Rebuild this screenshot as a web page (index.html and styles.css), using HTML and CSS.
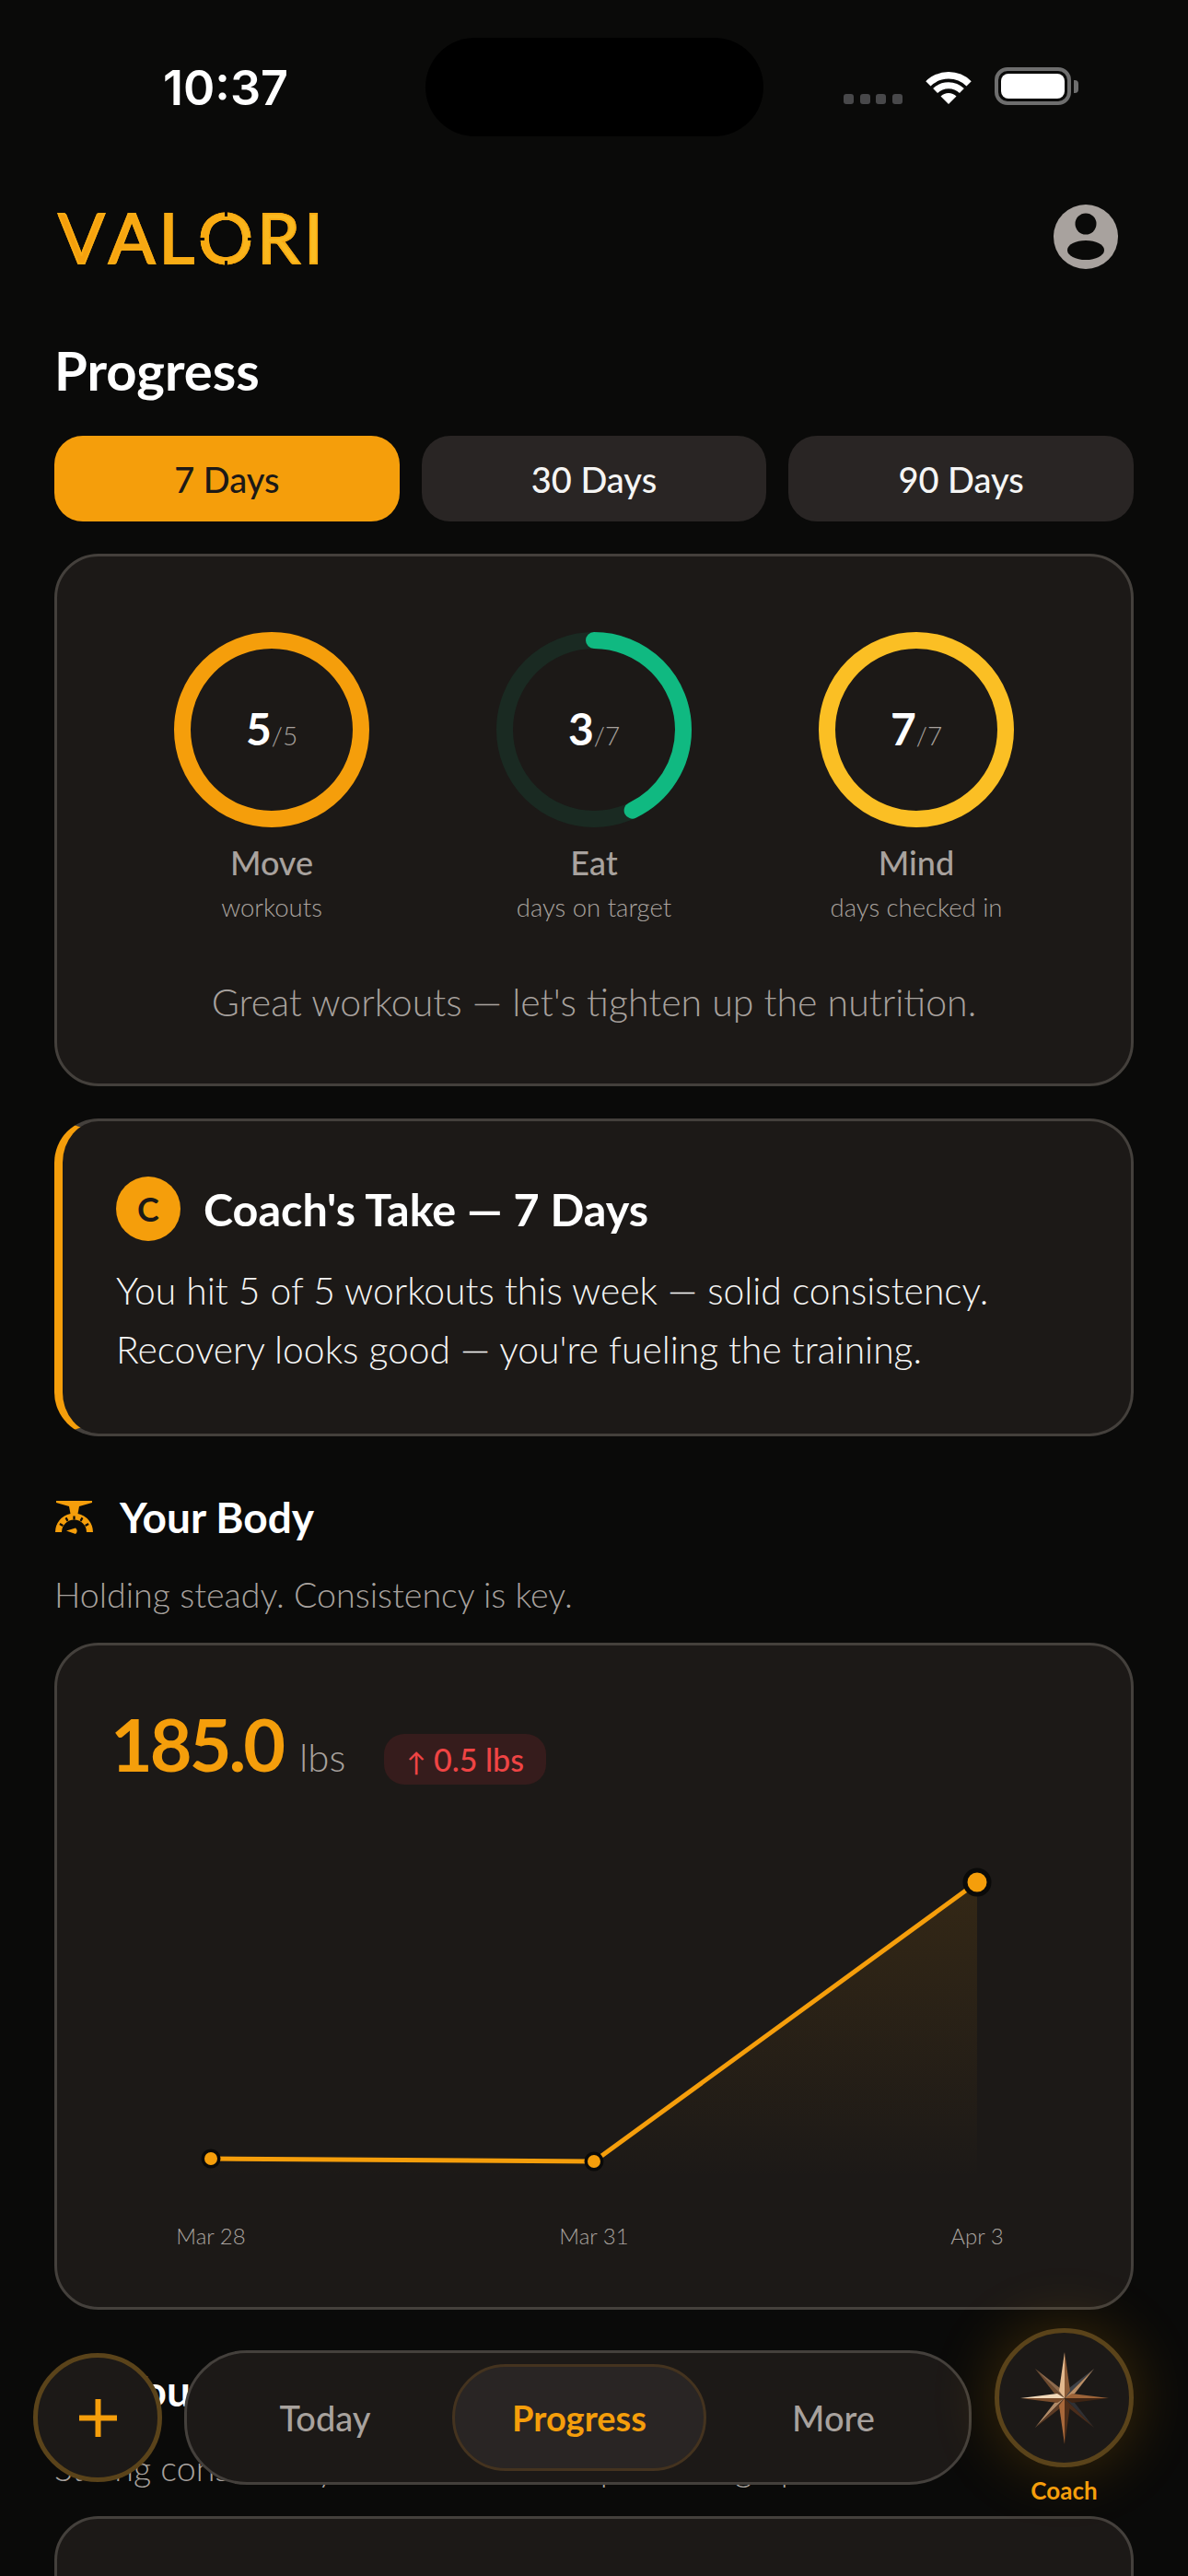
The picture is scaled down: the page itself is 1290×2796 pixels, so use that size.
FILE: index.html
```html
<!DOCTYPE html>
<html lang="en">
<head>
<meta charset="utf-8">
<title>Valori — Progress</title>
<link rel="stylesheet" href="styles.css">
</head>
<body>
<div class="screen">
  <header class="status">
    <div class="time">10:37</div>
    <div class="island"></div>
    <div class="status-right">
      <div class="signal"><i></i><i></i><i></i><i></i></div>
      <svg class="wifi" width="56" height="42" viewBox="0 0 56 42"><path d="M28 41 L19.5 32.5 A12 12 0 0 1 36.5 32.5 Z" fill="#fff"/><path d="M13.6 26.6 A20.5 20.5 0 0 1 42.4 26.6" fill="none" stroke="#fff" stroke-width="7"/><path d="M5.9 18.9 A31.5 31.5 0 0 1 50.1 18.9" fill="none" stroke="#fff" stroke-width="7.5"/></svg>
      <div class="battery"><div class="battery-fill"></div></div>
      <div class="battery-nub"></div>
    </div>
  </header>

  <div class="brand-row">
    <div class="logo">VAL<span class="logo-o">O<i class="n-t"></i><i class="n-b"></i><i class="n-l"></i><i class="n-r"></i></span>RI</div>
    <svg class="avatar" width="70" height="70" viewBox="0 0 70 70"><circle cx="35" cy="35" r="35" fill="#a8a29e"/><circle cx="35" cy="21" r="11.5" fill="#0a0a09"/><ellipse cx="35" cy="49.5" rx="20" ry="10.5" fill="#0a0a09"/></svg>
  </div>

  <main class="content">
    <h1 class="page-title">Progress</h1>
    <div class="tabs">
      <div class="tab tab-active">7 Days</div>
      <div class="tab">30 Days</div>
      <div class="tab">90 Days</div>
    </div>

    <section class="card rings-card">
      <div class="rings">
        <div class="ring-col">
          <div class="ring">
            <svg width="212" height="212" viewBox="0 0 212 212"><circle cx="106" cy="106" r="97" fill="none" stroke="#f59e0b" stroke-width="18"/></svg>
            <div class="ring-value"><b>5</b><span>/5</span></div>
          </div>
          <div class="ring-label">Move</div>
          <div class="ring-sub">workouts</div>
        </div>
        <div class="ring-col">
          <div class="ring">
            <svg width="212" height="212" viewBox="0 0 212 212"><circle cx="106" cy="106" r="97" fill="none" stroke="#1a2a22" stroke-width="18"/><circle cx="106" cy="106" r="97" fill="none" stroke="#10b981" stroke-width="18" stroke-linecap="round" stroke-dasharray="261.2 609.5" transform="rotate(-90 106 106)"/></svg>
            <div class="ring-value"><b>3</b><span>/7</span></div>
          </div>
          <div class="ring-label">Eat</div>
          <div class="ring-sub">days on target</div>
        </div>
        <div class="ring-col">
          <div class="ring">
            <svg width="212" height="212" viewBox="0 0 212 212"><circle cx="106" cy="106" r="97" fill="none" stroke="#fbbf24" stroke-width="18"/></svg>
            <div class="ring-value"><b>7</b><span>/7</span></div>
          </div>
          <div class="ring-label">Mind</div>
          <div class="ring-sub">days checked in</div>
        </div>
      </div>
      <p class="rings-msg">Great workouts — let's tighten up the nutrition.</p>
    </section>

    <section class="card coach-card">
      <div class="coach-head">
        <div class="coach-badge">C</div>
        <h2 class="coach-title">Coach's Take — 7 Days</h2>
      </div>
      <p class="coach-body">You hit 5 of 5 workouts this week — solid consistency.<br>Recovery looks good — you're fueling the training.</p>
    </section>

    <div class="section-head">
      <svg class="section-icon" width="42" height="38" viewBox="0 0 42 38"><path fill="#f59e0b" d="M1 1 H40 V3 L26 7 L24.5 15 A20.5 20.5 0 0 1 41 35 H34 A13.5 13.5 0 0 0 7 35 H0 A20.5 20.5 0 0 1 16.5 15 L15 7 L1 3 Z"/><path fill="#f59e0b" d="M12 33.5 L22 30.5 A4 4 0 0 1 22 37 Z"/><g stroke="#0a0a09" stroke-width="2.2"><path d="M20.5 21.5 V17.5"/><path d="M13.5 22.9 L11.5 19.4"/><path d="M27.5 22.9 L29.5 19.4"/><path d="M8.4 28 L4.9 26"/><path d="M32.6 28 L36.1 26"/></g></svg>
      <h2 class="section-title">Your Body</h2>
    </div>
    <p class="section-sub">Holding steady. Consistency is key.</p>

    <section class="card body-card">
      <div class="weight-row">
        <span class="weight-num">185.0</span>
        <span class="weight-unit">lbs</span>
        <span class="weight-delta"><span class="delta-arrow">↑</span> 0.5 lbs</span>
      </div>
      <svg class="chart" width="1170" height="370" viewBox="0 0 1170 370">
        <defs>
          <linearGradient id="area" x1="0" y1="0" x2="0" y2="1">
            <stop offset="0" stop-color="#f59e0b" stop-opacity=".11"/>
            <stop offset="1" stop-color="#f59e0b" stop-opacity="0"/>
          </linearGradient>
        </defs>
        <path d="M170 317 L586 320 L1002 17 V340 H170 Z" fill="url(#area)"/>
        <path d="M170 317 L586 320 L1002 17" fill="none" stroke="#f59e0b" stroke-width="5" stroke-linejoin="round" stroke-linecap="round"/>
        <circle cx="170" cy="317" r="8.75" fill="#f59e0b" stroke="#0a0a09" stroke-width="3.5"/>
        <circle cx="586" cy="320" r="8.75" fill="#f59e0b" stroke="#0a0a09" stroke-width="3.5"/>
        <circle cx="1002" cy="17" r="13" fill="#f59e0b" stroke="#0a0a09" stroke-width="5"/>
      </svg>
      <div class="chart-labels">
        <span>Mar 28</span><span>Mar 31</span><span>Apr 3</span>
      </div>
    </section>

    <div class="section-head">
      <svg class="section-icon" width="42" height="38" viewBox="0 0 42 38"><rect width="42" height="38" rx="6" fill="#f59e0b"/></svg>
      <h2 class="section-title">Your Habits</h2>
    </div>
    <p class="section-sub">Strong consistency this month — keep showing up.</p>
    <section class="card last-card"></section>
  </main>

  <div class="plus-btn"><svg width="41" height="41" viewBox="0 0 41 41"><path d="M20.5 0 V41 M0 20.5 H41" stroke="#f59e0b" stroke-width="6"/></svg></div>

  <nav class="nav">
    <div class="nav-item">Today</div>
    <div class="nav-item nav-active">Progress</div>
    <div class="nav-item">More</div>
  </nav>

  <div class="coach-btn">
    <div class="coach-circle">
      <svg width="100" height="104" viewBox="-50 -52 100 104">
        <polygon points="-32,-32 -11,-5 0,0" fill="#6e4a2e"/>
        <polygon points="-32,-32 -5,-11 0,0" fill="#8d6a4c"/>
        <polygon points="32,-32 5,-11 0,0" fill="#3f4248"/>
        <polygon points="32,-32 11,-5 0,0" fill="#b98e66"/>
        <polygon points="-32,32 -11,5 0,0" fill="#b08a68"/>
        <polygon points="-32,32 -5,11 0,0" fill="#5b3a24"/>
        <polygon points="32,32 11,5 0,0" fill="#2f3034"/>
        <polygon points="32,32 5,11 0,0" fill="#4a2c1a"/>
        <polygon points="0,-50 -6,-8 0,0" fill="#e3b98e"/>
        <polygon points="0,-50 6,-8 0,0" fill="#8a5a36"/>
        <polygon points="0,50 -6,8 0,0" fill="#a8683a"/>
        <polygon points="0,50 6,8 0,0" fill="#4d2d18"/>
        <polygon points="-48,0 -8,-5 0,0" fill="#f2d9ba"/>
        <polygon points="-48,0 -8,5 0,0" fill="#7a4d2c"/>
        <polygon points="48,0 8,-5 0,0" fill="#9c6338"/>
        <polygon points="48,0 8,5 0,0" fill="#3f2413"/>
      </svg>
    </div>
    <div class="coach-label">Coach</div>
  </div>
</div>
</body>
</html>
```
FILE: styles.css
```css
* { box-sizing: border-box; }
html, body { margin: 0; padding: 0; background: #0a0a09; }
body { font-family: "Lato", "Noto Sans", sans-serif; color: #fff; }
h1, h2, p { margin: 0; }

.screen { position: relative; width: 1290px; height: 2796px; overflow: hidden; background: #0a0a09; }

.status { height: 190px; position: relative; }
.time { position: absolute; left: 0; top: 67px; width: 490px; text-align: center; font-family: "Inter", sans-serif; font-weight: 600; font-size: 52px; line-height: 58px; }
.island { position: absolute; left: 462px; top: 41px; width: 367px; height: 107px; border-radius: 54px; background: #000; }
.status-right { position: absolute; left: 916px; top: 73px; display: flex; align-items: flex-end; height: 41px; }
.signal { display: flex; gap: 6.5px; margin-bottom: 1px; }
.signal i { display: block; width: 11px; height: 11px; border-radius: 3px; background: #48484a; }
.wifi { margin-left: 22px; margin-right: 22px; }
.battery { width: 83px; height: 41px; border: 4px solid #6e6e6e; border-radius: 14px; padding: 3px; }
.battery-fill { width: 100%; height: 100%; background: #fff; border-radius: 8px; }
.battery-nub { width: 5px; height: 14px; background: #6e6e6e; border-radius: 0 4px 4px 0; margin: 0 0 13.5px 3px; }

.brand-row { height: 128px; padding: 0 76px 0 63px; display: flex; justify-content: space-between; align-items: center; margin-top: 3px; }
.logo { font-weight: 400; font-size: 75px; line-height: 75px; letter-spacing: 4px; font-kerning: none; background: linear-gradient(90deg, #f59e0b, #fbbf24); -webkit-background-clip: text; background-clip: text; color: transparent; -webkit-text-stroke: 1.8px #f9ab13; }
.logo-o { position: relative; background: linear-gradient(90deg, #f8a70f, #fbb81f); -webkit-background-clip: text; background-clip: text; color: transparent; }
.logo-o i { position: absolute; background: #0a0a09; display: block; }
.logo-o .n-t { left: 29px; top: 18px; width: 3px; height: 5px; }
.logo-o .n-b { left: 29px; top: 71px; width: 3px; height: 5px; }
.logo-o .n-l { left: 2px; top: 46px; width: 5px; height: 3px; }
.logo-o .n-r { left: 54px; top: 46px; width: 5px; height: 3px; }

.content { padding: 47px 59px 0; display: flex; flex-direction: column; }
.page-title { font-weight: 700; font-size: 58px; line-height: 68px; }

.tabs { display: grid; grid-template-columns: repeat(3, 1fr); gap: 24px; margin-top: 37px; }
.tab { height: 93px; border-radius: 31px; background: #292524; display: flex; align-items: center; justify-content: center; font-size: 38px; font-weight: 500; color: #f5f5f4; }
.tab-active { background: #f59e0b; color: #1c1917; }

.card { background: #1c1917; border: 3px solid #44403c; border-radius: 48px; }
.rings-card { margin-top: 35px; height: 578px; padding-top: 82px; }
.rings { display: grid; grid-template-columns: repeat(3, 350px); justify-content: center; }
.ring-col { display: flex; flex-direction: column; align-items: center; }
.ring { position: relative; width: 212px; height: 212px; }
.ring svg { display: block; }
.ring-value { position: absolute; inset: 0; display: flex; align-items: baseline; justify-content: center; padding-top: 77px; }
.ring-value b { font-weight: 700; font-size: 48px; line-height: 56px; color: #fff; }
.ring-value span { font-weight: 300; font-size: 28px; color: #a8a29e; }
.ring-label { font-size: 36px; line-height: 44px; font-weight: 500; color: #a8a29e; margin-top: 16px; }
.ring-sub { font-size: 27.5px; line-height: 32px; font-weight: 300; color: #a8a29e; margin-top: 11px; }
.rings-msg { text-align: center; font-size: 41px; line-height: 50px; font-weight: 300; color: #a8a29e; margin-top: 62px; }

.coach-card { margin-top: 35px; height: 345px; border-left: 9px solid #f59e0b; padding: 60px 0 0 58px; }
.coach-head { display: flex; align-items: center; gap: 25px; }
.coach-badge { width: 70px; height: 70px; border-radius: 50%; background: #f59e0b; color: #1c1917; font-weight: 700; font-size: 36px; display: flex; align-items: center; justify-content: center; }
.coach-title { font-weight: 700; font-size: 48.5px; line-height: 56px; }
.coach-body { font-weight: 300; font-size: 40.8px; line-height: 64px; color: #f5f5f4; margin-top: 22px; }

.section-head { display: flex; align-items: center; gap: 28px; margin-top: 60px; height: 56px; }
.section-icon { flex: none; margin-left: 1px; }
.section-title { font-weight: 700; font-size: 46px; line-height: 56px; }
.section-sub { font-weight: 300; font-size: 37.6px; line-height: 48px; color: #a8a29e; margin-top: 32px; }

.body-card { margin-top: 28px; height: 724px; padding: 62px 0 0 58px; position: relative; }
.weight-row { display: flex; align-items: baseline; }
.weight-num { font-weight: 700; font-size: 79px; line-height: 90px; letter-spacing: -3px; color: #f59e0b; }
.weight-unit { font-weight: 300; font-size: 42px; color: #a8a29e; margin-left: 18px; }
.weight-delta { font-weight: 500; font-size: 34px; line-height: 55px; height: 55px; padding: 0 24px; border-radius: 22px; background: #361c1c; color: #ef4444; margin-left: 42px; }
.delta-arrow { font-size: 28px; }
.chart { position: absolute; left: -3px; top: 240px; }
.chart-labels { position: absolute; left: 0; top: 626px; width: 1170px; height: 30px; font-size: 24px; line-height: 30px; font-weight: 300; color: #a8a29e; }
.chart-labels span { position: absolute; top: 0; transform: translateX(-50%); }
.chart-labels span:nth-child(1) { left: 167px; }
.chart-labels span:nth-child(2) { left: 583px; }
.chart-labels span:nth-child(3) { left: 999px; }

.last-card { margin-top: 28px; height: 300px; }

.plus-btn { position: absolute; left: 36px; top: 2554px; width: 140px; height: 140px; border-radius: 50%; border: 5px solid #5a431a; background: #1c1917; display: flex; align-items: center; justify-content: center; }

.nav { position: absolute; left: 200px; top: 2551px; width: 855px; height: 146px; border-radius: 68px; background: #1c1917; border: 3px solid #44403c; display: grid; grid-template-columns: 276px 276px 276px; padding: 12px 0 0 12px; align-items: stretch; }
.nav-item { height: 116px; display: flex; align-items: center; justify-content: center; font-size: 38px; font-weight: 500; color: #a8a29e; border-radius: 58px; border: 3px solid transparent; }
.nav-active { background: #292524; border-color: #44331f; color: #f59e0b; font-weight: 700; }

.coach-btn { position: absolute; left: 1080px; top: 2527px; width: 151px; display: flex; flex-direction: column; align-items: center; }
.coach-circle { width: 151px; height: 151px; border-radius: 50%; border: 5px solid #5a431a; background: #1c1917; box-shadow: 0 0 70px rgba(245, 158, 11, .22); display: flex; align-items: center; justify-content: center; }
.coach-label { font-size: 26px; line-height: 32px; font-weight: 700; color: #f59e0b; margin-top: 9px; }
```
